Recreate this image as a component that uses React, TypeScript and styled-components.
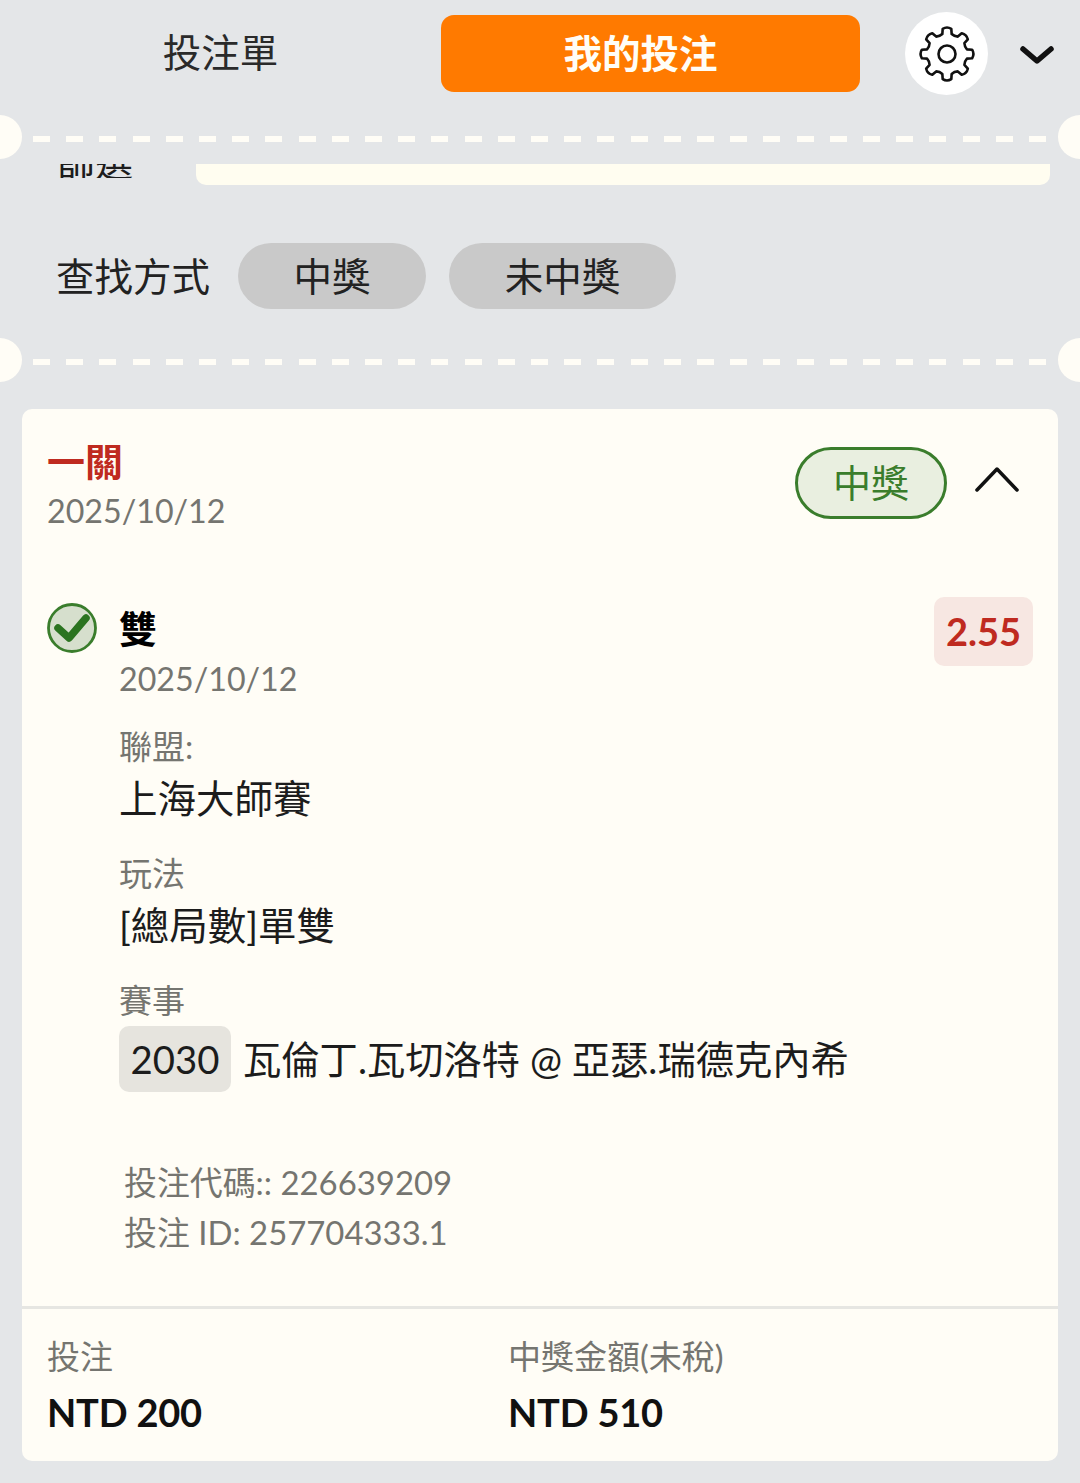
import React from "react";
import styled, { createGlobalStyle } from "styled-components";

const Global = createGlobalStyle`
  html, body { margin: 0; padding: 0; background: #e4e6e8; }
  body { font-family: Lato, "Noto Sans CJK TC", sans-serif; color: #1c1c1c; }
  * { box-sizing: border-box; }
`;

const Page = styled.div`
  width: 1080px;
  height: 1483px;
  overflow: hidden;
  background: #e4e6e8;
`;

const Header = styled.header`
  display: flex;
  align-items: flex-start;
  height: 139px;
  padding: 12px 0 0;
`;

const PlainTab = styled.div`
  width: 441px;
  height: 80px;
  padding-bottom: 4px;
  display: flex;
  align-items: center;
  justify-content: center;
  font-size: 38.5px;
  color: #2a2a2a;
`;

const ActiveTab = styled.div`
  width: 419px;
  height: 77px;
  margin-top: 3px;
  padding: 0 20px 6px 0;
  display: flex;
  align-items: center;
  justify-content: center;
  background: #ff7a00;
  border-radius: 13px;
  color: #fffdf6;
  font-size: 38.5px;
  font-weight: 700;
`;

const GearButton = styled.div`
  width: 83px;
  height: 83px;
  margin-left: 45px;
  border-radius: 50%;
  background: #fff;
  display: flex;
  align-items: center;
  justify-content: center;
`;

const ChevronBox = styled.div`
  width: 36px;
  height: 24px;
  margin: 31px 0 0 31px;
`;

const Perforation = styled.div`
  position: relative;
  height: 0;
  margin: 0 33px;
  &::before {
    content: "";
    display: block;
    height: 6px;
    margin-top: -3px;
    background: repeating-linear-gradient(90deg, #fffdf6 0 17px, transparent 17px 33.2px);
  }
`;

const Notch = styled.span<{ $side: "left" | "right" }>`
  position: absolute;
  top: -21px;
  ${(p) => (p.$side === "left" ? "left: -55px;" : "right: -55px;")}
  width: 44px;
  height: 44px;
  border-radius: 50%;
  background: #fffdf6;
`;

const ClippedFilter = styled.div`
  display: flex;
  align-items: flex-end;
  height: 49px;
  padding: 0 30px 0 57px;
  overflow: hidden;
`;

const ClippedLabel = styled.div`
  width: 139px;
  height: 14px;
  margin-bottom: 7px;
  overflow: hidden;
  display: flex;
  align-items: flex-end;
  font-size: 38px;
  line-height: 38px;
  & > span { display: block; transform: translateY(2px); }
`;

const ClippedInput = styled.div`
  flex: 1;
  height: 21px;
  background: #fffdf0;
  border-radius: 0 0 10px 10px;
`;

const SearchRow = styled.div`
  display: flex;
  align-items: center;
  height: 66px;
  margin: 58px 0 53px;
  padding-left: 56px;
`;

const SearchLabel = styled.div`
  width: 182px;
  padding-bottom: 4px;
  font-size: 38.5px;
  color: #222;
`;

const Pill = styled.div<{ $w: number }>`
  width: ${(p) => p.$w}px;
  height: 66px;
  margin-right: 23px;
  padding-bottom: 4px;
  border-radius: 33px;
  background: #c9c9c9;
  display: flex;
  align-items: center;
  justify-content: center;
  font-size: 38.5px;
  color: #222;
`;

const Card = styled.section`
  margin: 50px 22px 0;
  height: 1052px;
  background: #fffdf6;
  border-radius: 10px;
  display: flex;
  flex-direction: column;
`;

const CardHead = styled.div`
  display: flex;
  align-items: flex-start;
  justify-content: space-between;
  height: 189px;
  padding: 26px 39px 0 25px;
`;

const BetType = styled.div`
  font-size: 38px;
  line-height: 52px;
  font-weight: 700;
  color: #bf2a20;
`;

const DateText = styled.div`
  font-size: 32.2px;
  line-height: 48px;
  color: #757570;
`;

const HeadRight = styled.div`
  display: flex;
  align-items: center;
  gap: 28px;
  margin-top: 12px;
`;

const WonBadge = styled.div`
  width: 152px;
  height: 72px;
  padding-bottom: 5px;
  border: 3px solid #3a7d2c;
  border-radius: 36px;
  background: #e9efe0;
  color: #3a7d2c;
  display: flex;
  align-items: center;
  justify-content: center;
  font-size: 38px;
`;

const CollapseIcon = styled.svg`
  margin-top: -8px;
`;

const Selection = styled.div`
  display: flex;
  padding: 0 25px;
`;

const CheckCol = styled.div`
  width: 72px;
  flex: none;
  padding-top: 5px;
`;

const Details = styled.div`
  flex: 1;
`;

const TitleLine = styled.div`
  display: flex;
  justify-content: space-between;
  align-items: flex-start;
  height: 57px;
`;

const PickName = styled.div`
  font-size: 38px;
  line-height: 56px;
  margin-top: 2px;
  font-weight: 700;
  color: #000;
`;

const Odds = styled.div`
  width: 99px;
  height: 69px;
  margin-top: -1px;
  padding-bottom: 2px;
  border-radius: 10px;
  background: #f7e7e2;
  color: #bf2a20;
  font-size: 38px;
  font-weight: 700;
  display: flex;
  align-items: center;
  justify-content: center;
`;

const FieldLabel = styled.div`
  font-size: 33px;
  line-height: 48px;
  color: #757570;
`;

const FieldValue = styled.div`
  font-size: 38.5px;
  line-height: 56px;
  color: #1c1c1c;
`;

const Field = styled.div<{ $top: number }>`
  margin-top: ${(p) => p.$top}px;
`;

const MatchLine = styled.div`
  display: flex;
  align-items: center;
  gap: 13px;
  margin-top: 2px;
  font-size: 38.3px;
`;

const MatchCode = styled.span`
  width: 112px;
  height: 66px;
  border-radius: 10px;
  background: #e6e4de;
  display: flex;
  align-items: center;
  justify-content: center;
`;

const MatchName = styled.span`
  padding-bottom: 4px;
  margin-left: -1px;
`;

const Codes = styled.div`
  margin-top: 66px;
  padding-left: 102px;
  font-size: 32.9px;
  line-height: 50px;
  color: #757570;
`;

const Footer = styled.div`
  margin-top: auto;
  height: 155px;
  border-top: 3px solid #e6e6e2;
  padding: 23px 25px 0;
  display: grid;
  grid-template-columns: 461px 1fr;
`;

const FooterLabel = styled.div`
  font-size: 33px;
  line-height: 48px;
  margin-bottom: 4px;
  color: #757570;
`;

const FooterValue = styled.div`
  font-size: 38px;
  line-height: 56px;
  font-weight: 700;
  letter-spacing: -0.2px;
  color: #111;
`;

// An eight-toothed cog outline, centred on 30,30.
function cogPath(): string {
  const polar = (r: number, a: number) => `${(30 + r * Math.sin(a)).toFixed(2)} ${(30 - r * Math.cos(a)).toFixed(2)}`;
  const step = Math.PI / 4;
  const inner = 20.5;
  const outer = 27;
  let d = "";
  for (let i = 0; i < 8; i++) {
    const a = i * step;
    d += i === 0 ? `M${polar(inner, a - 0.23)}` : `Q${polar(inner - 1.5, a - step / 2)} ${polar(inner, a - 0.23)}`;
    d += `L${polar(outer - 1.5, a - 0.17)}Q${polar(outer + 0.8, a)} ${polar(outer - 1.5, a + 0.17)}L${polar(inner, a + 0.23)}`;
  }
  d += `Q${polar(inner - 1.5, -step / 2)} ${polar(inner, -0.23)}Z`;
  return d;
}

export default function App() {
  return (
    <Page>
      <Global />
      <Header>
        <PlainTab>投注單</PlainTab>
        <ActiveTab>我的投注</ActiveTab>
        <GearButton>
          <svg width="60" height="60" viewBox="0 0 60 60" fill="none" stroke="#111" strokeWidth="2.6" strokeLinecap="round" strokeLinejoin="round">
            <path d={cogPath()} />
            <circle cx="30" cy="30" r="8.5" />
          </svg>
        </GearButton>
        <ChevronBox>
          <svg width="36" height="24" viewBox="0 0 36 24" fill="none" stroke="#111" strokeWidth="5.5" strokeLinecap="round" strokeLinejoin="round">
            <path d="M4 6 L18 18 L32 6" />
          </svg>
        </ChevronBox>
      </Header>
      <Perforation>
        <Notch $side="left" />
        <Notch $side="right" />
      </Perforation>
      <ClippedFilter>
        <ClippedLabel><span>篩選</span></ClippedLabel>
        <ClippedInput />
      </ClippedFilter>
      <SearchRow>
        <SearchLabel>查找方式</SearchLabel>
        <Pill $w={188}>中獎</Pill>
        <Pill $w={227}>未中獎</Pill>
      </SearchRow>
      <Perforation>
        <Notch $side="left" />
        <Notch $side="right" />
      </Perforation>
      <Card>
        <CardHead>
          <div>
            <BetType>一關</BetType>
            <DateText>2025/10/12</DateText>
          </div>
          <HeadRight>
            <WonBadge>中獎</WonBadge>
            <CollapseIcon width="44" height="28" viewBox="0 0 44 28" fill="none" stroke="#111" strokeWidth="3.5" strokeLinecap="round" strokeLinejoin="round">
              <path d="M2 25 L22 4 L42 25" />
            </CollapseIcon>
          </HeadRight>
        </CardHead>
        <Selection>
          <CheckCol>
            <svg width="50" height="50" viewBox="0 0 50 50">
              <circle cx="25" cy="25" r="23.5" fill="#d6dfcd" stroke="#3a7d2c" strokeWidth="2.8" />
              <path d="M11 25 L22 35 L39 15" fill="none" stroke="#2b7420" strokeWidth="7.5" strokeLinecap="round" strokeLinejoin="round" />
            </svg>
          </CheckCol>
          <Details>
            <TitleLine>
              <PickName>雙</PickName>
              <Odds>2.55</Odds>
            </TitleLine>
            <DateText>2025/10/12</DateText>
            <Field $top={19}>
              <FieldLabel>聯盟:</FieldLabel>
              <FieldValue>上海大師賽</FieldValue>
            </Field>
            <Field $top={23}>
              <FieldLabel>玩法</FieldLabel>
              <FieldValue>[總局數]單雙</FieldValue>
            </Field>
            <Field $top={23}>
              <FieldLabel>賽事</FieldLabel>
              <MatchLine>
                <MatchCode>2030</MatchCode>
                <MatchName>瓦倫丁.瓦切洛特 @ 亞瑟.瑞德克內希</MatchName>
              </MatchLine>
            </Field>
          </Details>
        </Selection>
        <Codes>
          <div>投注代碼:: 226639209</div>
          <div>投注 ID: 257704333.1</div>
        </Codes>
        <Footer>
          <div>
            <FooterLabel>投注</FooterLabel>
            <FooterValue>NTD 200</FooterValue>
          </div>
          <div>
            <FooterLabel>中獎金額(未稅)</FooterLabel>
            <FooterValue>NTD 510</FooterValue>
          </div>
        </Footer>
      </Card>
    </Page>
  );
}
